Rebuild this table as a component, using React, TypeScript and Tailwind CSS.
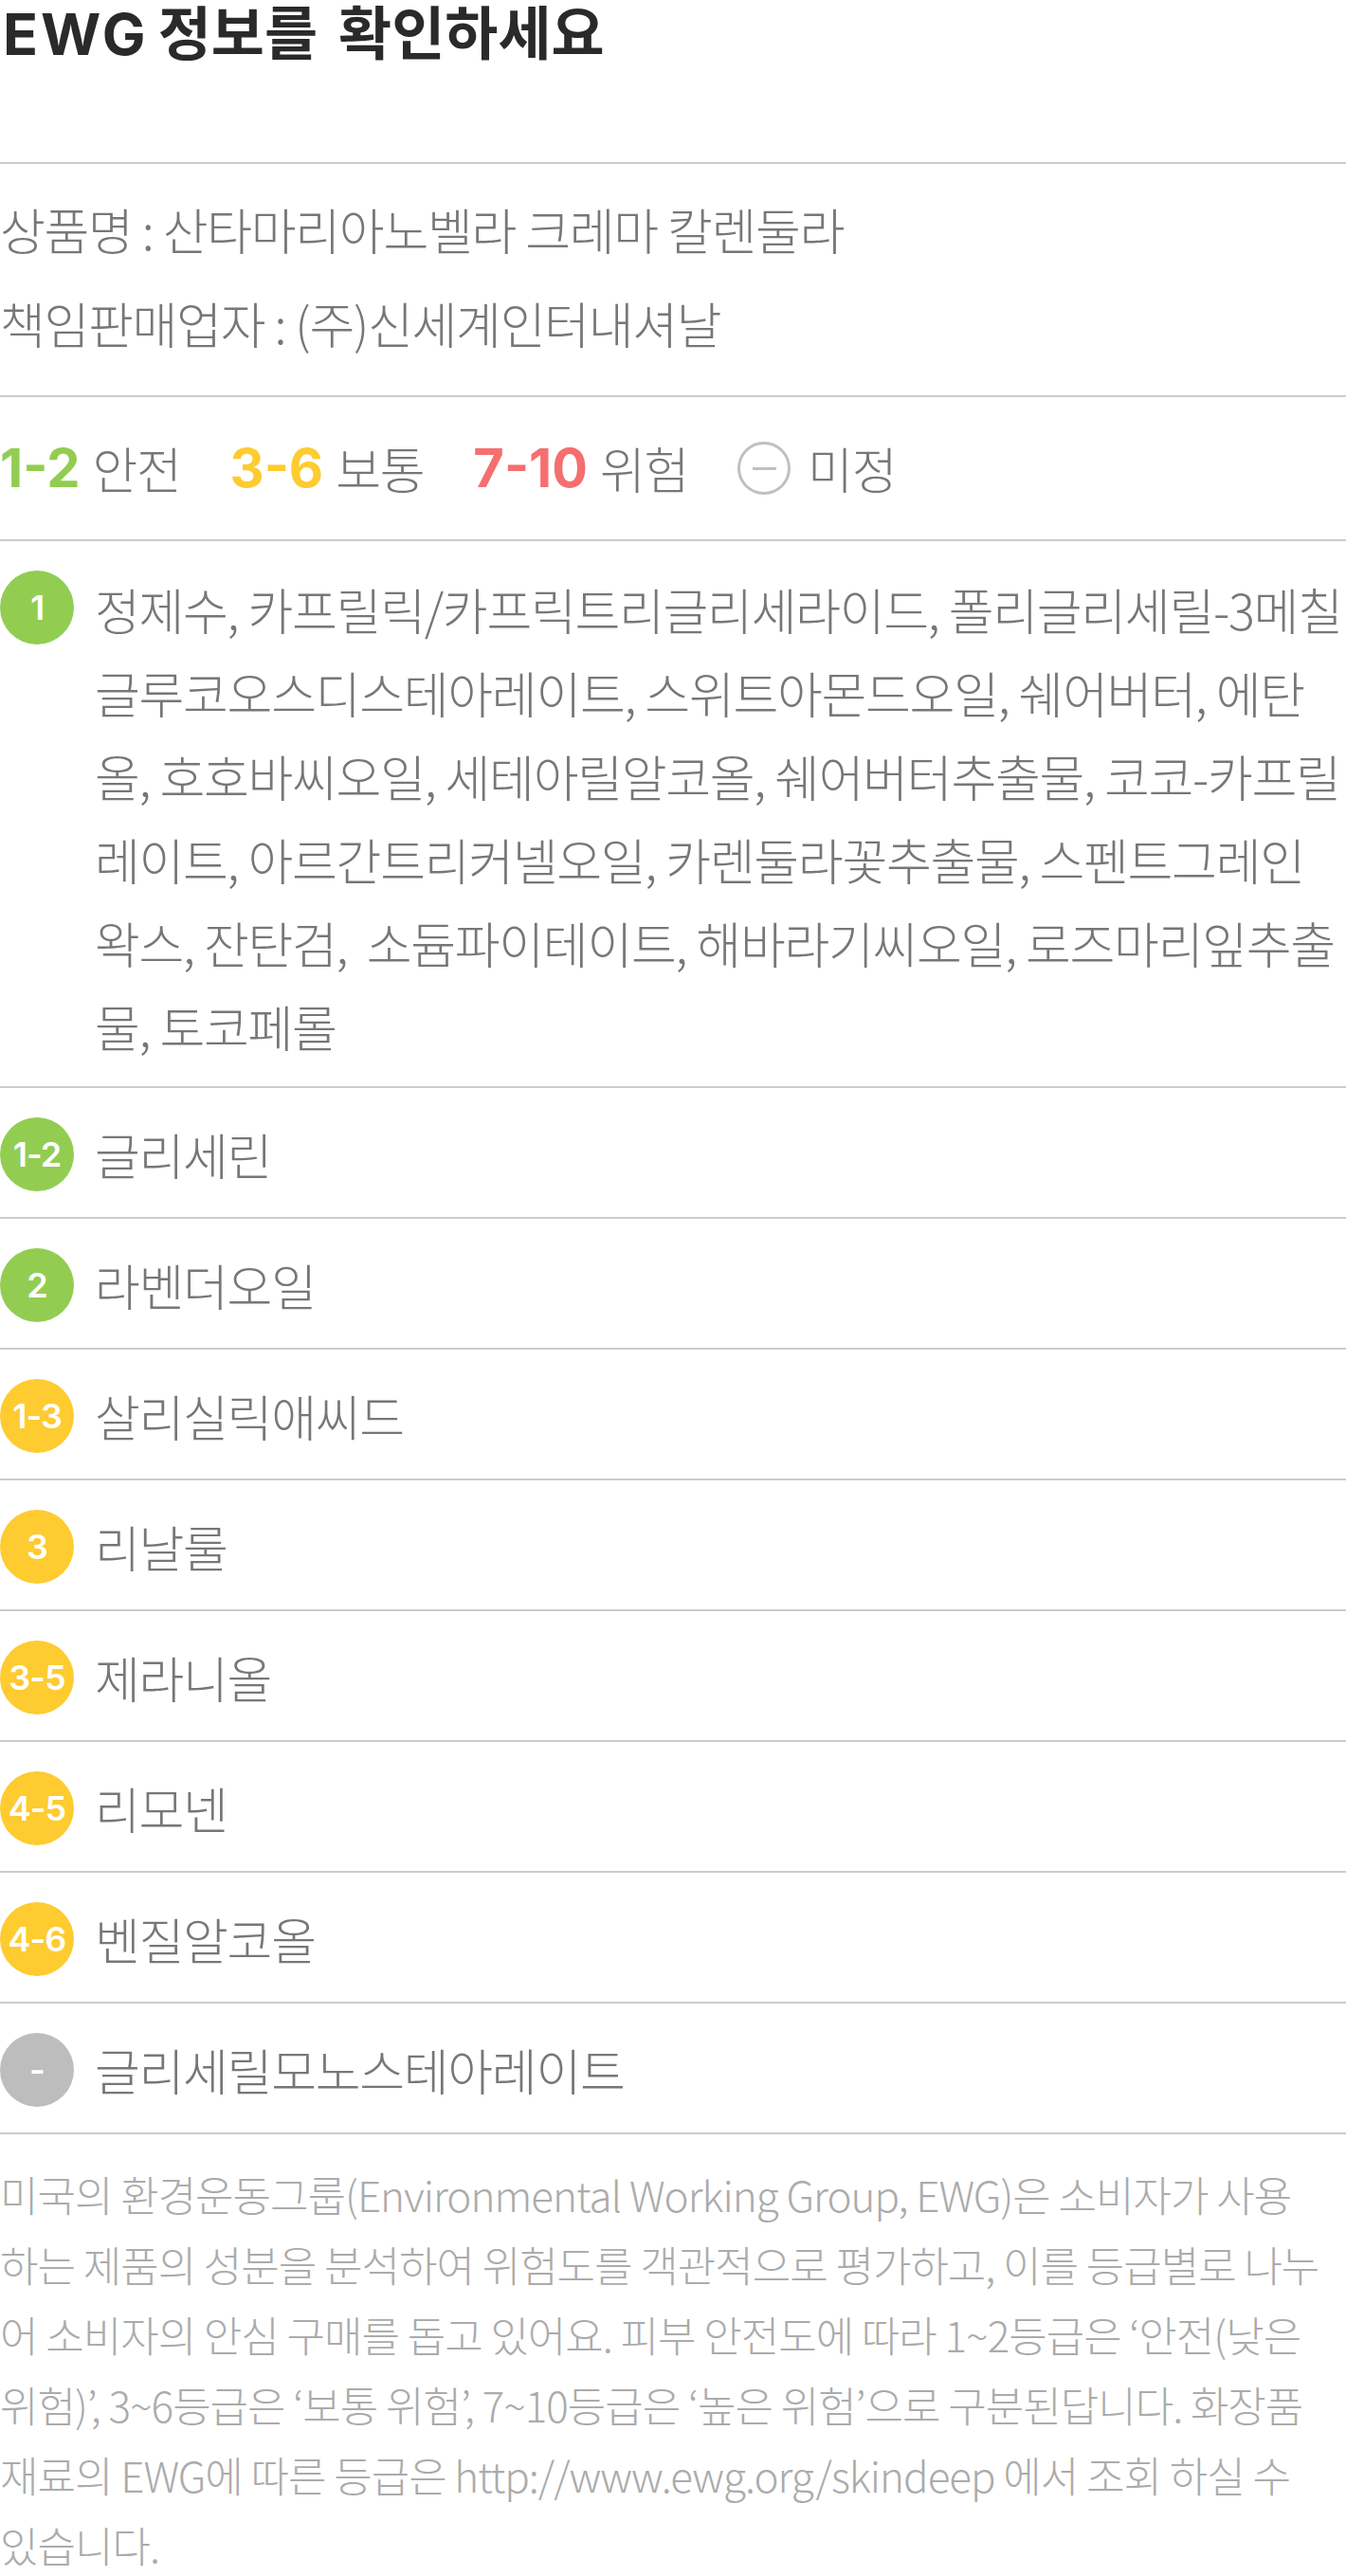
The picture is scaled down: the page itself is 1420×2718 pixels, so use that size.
import React from "react";

const GREEN = "bg-[#92cd52]";
const YELLOW = "bg-[#fecb30]";
const GRAY = "bg-[#bdbdbd]";

type Row = { grade: string; color: string; name: string };

const rows: Row[] = [
  { grade: "1-2", color: GREEN, name: "글리세린" },
  { grade: "2", color: GREEN, name: "라벤더오일" },
  { grade: "1-3", color: YELLOW, name: "살리실릭애씨드" },
  { grade: "3", color: YELLOW, name: "리날룰" },
  { grade: "3-5", color: YELLOW, name: "제라니올" },
  { grade: "4-5", color: YELLOW, name: "리모넨" },
  { grade: "4-6", color: YELLOW, name: "벤질알코올" },
  { grade: "-", color: GRAY, name: "글리세릴모노스테아레이트" },
];

const firstLines = [
  "정제수, 카프릴릭/카프릭트리글리세라이드, 폴리글리세릴-3메칠",
  "글루코오스디스테아레이트, 스위트아몬드오일, 쉐어버터, 에탄",
  "올, 호호바씨오일, 세테아릴알코올, 쉐어버터추출물, 코코-카프릴",
  "레이트, 아르간트리커넬오일, 카렌둘라꽃추출물, 스펜트그레인",
  "왁스, 잔탄검,  소듐파이테이트, 해바라기씨오일, 로즈마리잎추출",
  "물, 토코페롤",
];

const footerLines = [
  "미국의 환경운동그룹(Environmental Working Group, EWG)은 소비자가 사용",
  "하는 제품의 성분을 분석하여 위험도를 객관적으로 평가하고, 이를 등급별로 나누",
  "어 소비자의 안심 구매를 돕고 있어요. 피부 안전도에 따라 1~2등급은 ‘안전(낮은",
  "위험)’, 3~6등급은 ‘보통 위험’, 7~10등급은 ‘높은 위험’으로 구분된답니다. 화장품",
  "재료의 EWG에 따른 등급은 http://www.ewg.org/skindeep 에서 조회 하실 수",
  "있습니다.",
];

function Badge({ grade, color }: { grade: string; color: string }) {
  return (
    <div
      className={`w-[78px] h-[78px] rounded-full flex items-center justify-center text-white text-[36px] font-semibold leading-none tracking-[-1px] [font-family:Inter,'Noto_Sans',sans-serif] ${color}`}
    >
      {grade}
    </div>
  );
}

function LegendItem({
  digits,
  color,
  label,
}: {
  digits: string;
  color: string;
  label: string;
}) {
  return (
    <div className="flex items-center">
      <span
        className={`text-[56px] font-bold leading-none [font-family:Inter,sans-serif] ${color}`}
      >
        {digits}
      </span>
      <span className="ml-[13px] text-[52px] leading-none tracking-[-1.3px] text-[#777777] font-light">
        {label}
      </span>
    </div>
  );
}

export default function App() {
  return (
    <div className="w-[1420px] overflow-hidden bg-white [font-family:'Noto_Sans_CJK_KR','Noto_Sans',sans-serif]">
      {/* Title */}
      <h1 className="h-[171px] text-[61px] leading-[64px] font-bold text-[#2a2a2a] whitespace-nowrap">
        <span className="[font-family:Inter,sans-serif] tracking-[3px] ml-[3px]">EWG</span>
        <span className="ml-[10px]">정보를</span>
        <span className="ml-[22px]">확인하세요</span>
      </h1>

      {/* Product info */}
      <div className="border-t-2 border-[#cccccc] pt-[19px] pb-[27px] text-[52px] leading-[99px] tracking-[-1.3px] text-[#777777] font-light whitespace-nowrap">
        <div>상품명 : 산타마리아노벨라 크레마 칼렌둘라</div>
        <div>책임판매업자 : (주)신세계인터내셔날</div>
      </div>

      {/* Legend */}
      <div className="border-t-2 border-[#cccccc] h-[152px] flex items-center whitespace-nowrap">
        <LegendItem digits="1-2" color="text-[#92cd52]" label="안전" />
        <div className="ml-[52px]">
          <LegendItem digits="3-6" color="text-[#fecb30]" label="보통" />
        </div>
        <div className="ml-[52px]">
          <LegendItem digits="7-10" color="text-[#f56f6f]" label="위험" />
        </div>
        <div className="flex items-center ml-[52px]">
          <div className="w-[56px] h-[56px] rounded-full border-[3px] border-[#c0c0c0] flex items-center justify-center">
            <div className="w-[25px] h-[3px] bg-[#c0c0c0]" />
          </div>
          <span className="ml-[18px] text-[52px] leading-none tracking-[-1.3px] text-[#777777] font-light">
            미정
          </span>
        </div>
      </div>

      {/* First ingredient group */}
      <div className="border-t-2 border-[#cccccc] pt-[28px] pb-[19px] flex">
        <div className="w-[100px] shrink-0 pt-[3px]">
          <Badge grade="1" color={GREEN} />
        </div>
        <div className="text-[52px] leading-[88px] tracking-[-1.3px] text-[#777777] font-light whitespace-pre">
          {firstLines.map((l, i) => (
            <div key={i}>{l}</div>
          ))}
        </div>
      </div>

      {/* Other rows */}
      {rows.map((r, i) => (
        <div
          key={i}
          className="border-t-2 border-[#cccccc] pt-[26px] pb-[22px] flex items-center"
        >
          <div className="w-[100px] shrink-0 h-[88px] flex items-center">
            <Badge grade={r.grade} color={r.color} />
          </div>
          <div className="text-[52px] leading-[88px] tracking-[-1.3px] text-[#777777] font-light whitespace-nowrap">
            {r.name}
          </div>
        </div>
      ))}

      {/* Footer */}
      <div className="border-t-2 border-[#cccccc] pt-[26px] text-[44px] leading-[74px] tracking-[-1px] text-[#ababab] font-light whitespace-pre">
        {footerLines.map((l, i) => (
          <div key={i}>{l}</div>
        ))}
      </div>
    </div>
  );
}
